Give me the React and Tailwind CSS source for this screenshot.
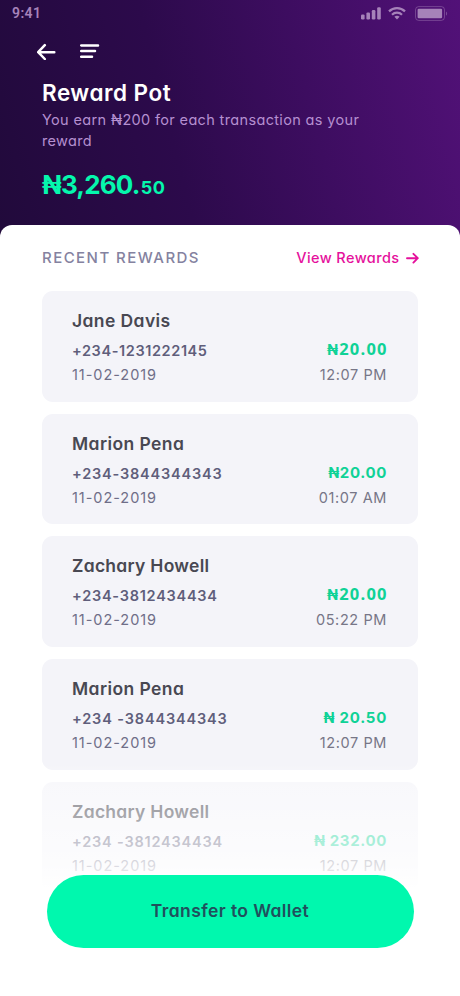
const rewards = [
  {
    name: "Jane Davis",
    phone: "+234-1231222145",
    date: "11-02-2019",
    amount: "20.00",
    time: "12:07 PM",
    nameClass: "tracking-[0.4px]",
    phoneClass: "tracking-[0.6px]",
    amountClass: "font-['Open_Sans'] text-[16.5px] tracking-[1.2px] mr-[-0.7px]",
  },
  {
    name: "Marion Pena",
    phone: "+234-3844344343",
    date: "11-02-2019",
    amount: "20.00",
    time: "01:07 AM",
    nameClass: "tracking-[0.42px]",
    phoneClass: "tracking-[0.8px]",
    amountClass: "pt-px text-[15px] tracking-[0.65px]",
  },
  {
    name: "Zachary Howell",
    phone: "+234-3812434434",
    date: "11-02-2019",
    amount: "20.00",
    time: "05:22 PM",
    nameClass: "tracking-[0.28px]",
    phoneClass: "tracking-[0.75px]",
    amountClass: "font-['Open_Sans'] text-[16.5px] tracking-[1.2px] mr-[-0.7px]",
  },
  {
    name: "Marion Pena",
    phone: "+234 -3844344343",
    date: "11-02-2019",
    amount: " 20.50",
    time: "12:07 PM",
    nameClass: "tracking-[0.42px]",
    phoneClass: "tracking-[0.85px]",
    amountClass: "pt-px text-[15px] tracking-[0.75px]",
  },
  {
    name: "Zachary Howell",
    phone: "+234 -3812434434",
    date: "11-02-2019",
    amount: " 232.00",
    time: "12:07 PM",
    nameClass: "tracking-[0.28px]",
    phoneClass: "tracking-[0.8px]",
    amountClass: "pt-px text-[15px] tracking-[0.65px]",
  },
];

function StatusBar() {
  return (
    <div className="flex h-[26px] items-center justify-between pl-3 pr-[12px] text-[#a682b9]">
      <span className="font-[Roboto] text-[14px] font-semibold leading-none tracking-[0.4px]">
        9:41
      </span>
      <div className="flex items-center">
        <svg width="20" height="13" viewBox="0 0 20 13" fill="currentColor">
          <rect x="0" y="7.4" width="3.6" height="5" rx="1.2" />
          <rect x="5.4" y="5.4" width="3.6" height="7" rx="1.2" />
          <rect x="10.8" y="3" width="3.6" height="9.4" rx="1.2" />
          <rect x="16.2" y="0.2" width="3.6" height="12.2" rx="1.2" />
        </svg>
        <svg
          className="ml-[7px]"
          width="18"
          height="13"
          viewBox="0 0 18 13"
          fill="none"
          stroke="currentColor"
          strokeWidth="2.2"
        >
          <path d="M1 4.4C5.4 0 12.6 0 17 4.4" />
          <path d="M4 7.7C6.8 4.9 11.2 4.9 14 7.7" />
          <path d="M6.4 9.8C7.9 8.4 10.1 8.4 11.6 9.8L9 12.4Z" fill="currentColor" stroke="none" />
        </svg>
        <svg className="ml-[9px]" width="33" height="15" viewBox="0 0 33 15">
          <rect
            x="0.5"
            y="0.6"
            width="29"
            height="13.8"
            rx="3.2"
            fill="none"
            stroke="currentColor"
            strokeOpacity="0.45"
          />
          <rect x="2.6" y="2.8" width="24.5" height="9.4" rx="1.2" fill="currentColor" />
          <path d="M31 5.4C32.5 6 32.5 9 31 9.6Z" fill="currentColor" fillOpacity="0.5" />
        </svg>
      </div>
    </div>
  );
}

function RewardCard({ reward }) {
  return (
    <li className="flex h-[110.6px] shrink-0 justify-between rounded-[11px] bg-[#f4f4f9] pl-[30px] pr-[31px]">
      <div className="pt-[17px]">
        <h3
          className={`text-[17.5px] font-semibold leading-[26px] text-[#484852] ${reward.nameClass}`}
        >
          {reward.name}
        </h3>
        <p
          className={`mt-[5px] text-[14.5px] font-semibold leading-6 text-[#5f5e7b] ${reward.phoneClass}`}
        >
          {reward.phone}
        </p>
        <p className="text-[14.5px] leading-[23px] tracking-[0.95px] text-[#6f6e88]">
          {reward.date}
        </p>
      </div>
      <div className="pt-[46px] text-right">
        <p className={`h-6 font-bold leading-6 text-[#0fd296] ${reward.amountClass}`}>
          <span className="font-[Inter] text-[14.5px]">₦</span>
          {reward.amount}
        </p>
        <p className="mt-[2px] text-[14.5px] leading-[23px] tracking-[0.6px] text-[#777687]">
          {reward.time}
        </p>
      </div>
    </li>
  );
}

export default function App() {
  return (
    <div className="flex h-[996px] w-[460px] flex-col overflow-hidden bg-[linear-gradient(76deg,#210a3b_0%,#2c0a4b_38%,#3d0d60_66%,#521178_100%)] bg-[length:460px_240px] bg-no-repeat font-[Inter,sans-serif] [font-feature-settings:'cv11']">
      <header className="h-[225px] shrink-0">
        <StatusBar />
        <nav className="flex h-[50px] items-center gap-[24px] pl-[37px] text-white">
          <svg
            width="19"
            height="18"
            viewBox="0 0 19 18"
            fill="none"
            stroke="currentColor"
            strokeWidth="2.5"
            strokeLinecap="round"
            strokeLinejoin="round"
          >
            <path d="M17.3 10.2H1.6M7.8 3.2L1.2 10.2L7.8 17" />
          </svg>
          <svg
            width="20"
            height="18"
            viewBox="0 0 20 18"
            fill="none"
            stroke="currentColor"
            strokeWidth="2.5"
            strokeLinecap="round"
          >
            <path d="M1.2 3.4H18M1.2 9.1H15M1.2 14.7H12" />
          </svg>
        </nav>
        <div className="pl-[42px]">
          <h1 className="pt-[3px] text-[22.5px] font-semibold leading-[28px] tracking-[0.5px] text-white">
            Reward Pot
          </h1>
          <p className="mt-[2px] w-[350px] text-[14.5px] leading-[21px] tracking-[0.35px] text-[#b58fd0]">
            You earn ₦200 for each transaction as your
            <br />
            reward
          </p>
          <p className="mt-[15px] text-[26px] font-bold leading-[38px] tracking-[-0.8px] text-[#05f7ad]">
            ₦3,260.
            <span className="ml-px text-[18px] tracking-[0.4px]">50</span>
          </p>
        </div>
      </header>

      <main className="relative flex min-h-0 flex-1 flex-col rounded-t-[12px] bg-white px-[42px]">
        <div className="flex h-[65px] shrink-0 items-center justify-between">
          <h2 className="pt-[2px] text-[15px] font-medium tracking-[1.45px] text-[#8482a0]">
            RECENT REWARDS
          </h2>
          <a className="mr-[-0.5px] flex items-center gap-[6px] text-[14.5px] font-medium tracking-[0.4px] text-[#e5109c]">
            View Rewards
            <svg
              width="13"
              height="12"
              viewBox="0 0 13 12"
              fill="none"
              stroke="currentColor"
              strokeWidth="1.9"
              strokeLinecap="round"
              strokeLinejoin="round"
            >
              <path d="M1 6.2H11.6M7.4 1.8L11.8 6.2L7.4 10.6" />
            </svg>
          </a>
        </div>
        <ul className="flex flex-col gap-[12.1px] pt-[1px]">
          {rewards.map((reward, i) => (
            <RewardCard key={i} reward={reward} />
          ))}
        </ul>

        {/* fades the list out behind the button */}
        <div className="absolute inset-x-0 bottom-0 h-[232px] bg-[linear-gradient(to_bottom,rgba(255,255,255,0)_0px,rgba(255,255,255,0.4)_18px,rgba(255,255,255,0.5)_47px,rgba(255,255,255,0.64)_78px,rgba(255,255,255,0.74)_101px,#fff_125px)] px-[46.5px] pt-[111px]">
          <button className="h-[73px] w-full rounded-full bg-[#00f8ae] text-[17.5px] font-semibold tracking-[0.4px] text-[#20505d]">
            Transfer to Wallet
          </button>
        </div>
      </main>
    </div>
  );
}
